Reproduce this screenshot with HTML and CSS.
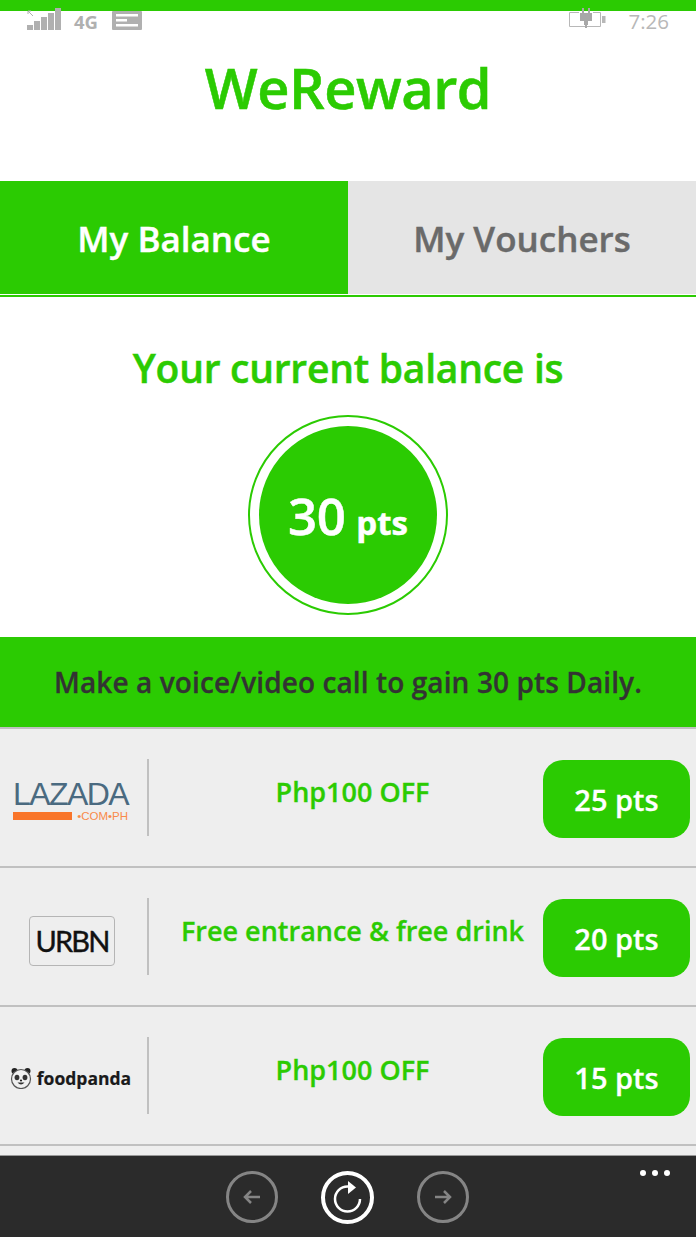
FILE: index.html
```html
<!DOCTYPE html>
<html lang="en">
<head>
    <meta charset="UTF-8">
    <meta name="viewport" content="width=device-width, initial-scale=1.0">
    <title>WeReward</title>
    <link rel="stylesheet" href="styles.css">
</head>
<body>

    <!-- Phone status bar -->
    <div class="status-bar">
        <div class="status-group">
            <svg class="signal" width="34" height="22" viewBox="0 0 34 22">
                <path d="M1 3l5 5M1 3h3M1 3v3" fill="none" stroke="#b0b0b0" stroke-width="1"/>
                <rect x="0" y="17" width="6" height="5" fill="#b0b0b0"/>
                <rect x="7" y="13" width="6" height="9" fill="#b0b0b0"/>
                <rect x="14" y="9" width="6" height="13" fill="#b0b0b0"/>
                <rect x="21" y="5" width="6" height="17" fill="#b0b0b0"/>
                <rect x="28" y="0" width="6" height="22" fill="#b0b0b0"/>
            </svg>
            <span class="network">4G</span>
            <svg class="message" width="30" height="19" viewBox="0 0 30 19">
                <rect width="30" height="19" rx="1" fill="#b0b0b0"/>
                <rect x="4" y="3" width="22" height="2.500" fill="#fff"/>
                <rect x="4" y="8" width="11" height="2.500" fill="#fff"/>
                <rect x="4" y="13" width="22" height="2.500" fill="#fff"/>
            </svg>
        </div>
        <div class="status-group">
            <svg class="battery" width="37" height="20" viewBox="0 0 37 20">
                <path d="M10 4.500H0.500V18.500H31.500V4.500H24" fill="none" stroke="#b8b8b8" stroke-width="1"/>
                <rect x="33" y="8" width="3.500" height="7" fill="#b8b8b8"/>
                <path d="M11 5h12v8h-4v4h-4v-4h-4z M13 0h2v5h-2z M19 0h2v5h-2z M16 17h2v3h-2z" fill="#a8a8a8"/>
            </svg>
            <span class="clock">7:26</span>
        </div>
    </div>

    <header class="app-header">
        <h1>WeReward</h1>
    </header>

    <nav class="tabs">
        <a class="tab tab-active">My Balance</a>
        <a class="tab">My Vouchers</a>
    </nav>

    <section class="balance">
        <h2>Your current balance is</h2>
        <div class="balance-ring">
            <div class="balance-circle">
                <span class="balance-num">30</span>
                <span class="balance-unit">pts</span>
            </div>
        </div>
    </section>

    <div class="banner">Make a voice/video call to gain 30 pts Daily.</div>

    <!-- Voucher list -->
    <ul class="vouchers">
        <li class="voucher">
            <div class="brand">
                <div class="lazada">
                    <span class="lazada-name">LAZADA</span>
                    <span class="lazada-sub"><i class="lazada-bar"></i><span>•COM•PH</span></span>
                </div>
            </div>
            <p class="voucher-title">Php100 OFF</p>
            <a class="points">25 pts</a>
        </li>
        <li class="voucher">
            <div class="brand">
                <span class="urbn">URBN</span>
            </div>
            <p class="voucher-title">Free entrance &amp; free drink</p>
            <a class="points">20 pts</a>
        </li>
        <li class="voucher">
            <div class="brand">
                <div class="foodpanda">
                    <svg width="22" height="22" viewBox="0 0 22 22">
                        <circle cx="4.500" cy="4" r="3" fill="#222"/>
                        <circle cx="17.500" cy="4" r="3" fill="#222"/>
                        <circle cx="11" cy="12" r="9.500" fill="#f0f0f0" stroke="#555" stroke-width="1.200"/>
                        <ellipse cx="7" cy="10.500" rx="2.400" ry="2.800" fill="#333"/>
                        <ellipse cx="15" cy="10.500" rx="2.400" ry="2.800" fill="#333"/>
                        <circle cx="11" cy="13.500" r="1.100" fill="#222"/>
                        <path d="M7.500 15.500q3.500 4 7 0" fill="#333"/>
                    </svg>
                    <span>foodpanda</span>
                </div>
            </div>
            <p class="voucher-title">Php100 OFF</p>
            <a class="points">15 pts</a>
        </li>
    </ul>

    <!-- Browser app bar -->
    <footer class="app-bar">
        <span class="round-btn">
            <svg width="20" height="16" viewBox="0 0 20 16">
                <path d="M9 2L3 8l6 6M3 8h15" fill="none" stroke="#858585" stroke-width="2.500"/>
            </svg>
        </span>
        <span class="round-btn round-btn-on">
            <svg width="30" height="34" viewBox="0 0 30 34">
                <path d="M27 18a12.500 12.500 0 1 1-12.500-12.500h2" fill="none" stroke="#fff" stroke-width="2.500"/>
                <path d="M15 0l8 6.500-8 6.500z" fill="#fff"/>
            </svg>
        </span>
        <span class="round-btn">
            <svg width="20" height="16" viewBox="0 0 20 16">
                <path d="M11 2l6 6-6 6M17 8H2" fill="none" stroke="#858585" stroke-width="2.500"/>
            </svg>
        </span>
        <div class="more"><i></i><i></i><i></i></div>
    </footer>

</body>
</html>
```

FILE: styles.css
```css
:root {
    --green: #2bcb02;
    --row-bg: #eeeeee;
    --line: #c0c0c0;
}

* {
    margin: 0;
    padding: 0;
    box-sizing: border-box;
}

body {
    width: 696px;
    height: 1237px;
    overflow: hidden;
    background: #fff;
    font-family: 'Open Sans', sans-serif;
    font-weight: 600;
    color: var(--green);
}

/* Status bar */
.status-bar {
    height: 31px;
    padding: 8px 27px 0 27px;
    display: flex;
    justify-content: space-between;
    align-items: flex-start;
    background: linear-gradient(var(--green) 11px, #fff 11px);
}

.status-group {
    display: flex;
    align-items: flex-start;
}

.network {
    margin: 3px 14px 0 13px;
    font-size: 18.500px;
    line-height: 21px;
    font-weight: 700;
    color: #b0b0b0;
}

.message {
    margin-top: 3px;
}

.clock {
    margin: 1px 0 0 22px;
    font-size: 20.500px;
    line-height: 24px;
    font-weight: 400;
    color: #b8b8b8;
}

/* Title */
.app-header {
    height: 150px;
    padding-top: 20px;
    text-align: center;
}

.app-header h1 {
    font-size: 56px;
    line-height: 72px;
    font-weight: 600;
    letter-spacing: -0.5px;
    -webkit-text-stroke: 0.5px currentColor;
}

/* Tabs */
.tabs {
    display: flex;
    height: 116px;
    padding-bottom: 1px;
    border-bottom: 2px solid var(--green);
}

.tab {
    flex: 1;
    display: flex;
    align-items: center;
    justify-content: center;
    padding-top: 2px;
    font-size: 35px;
    -webkit-text-stroke: 0.4px currentColor;
    color: #6a6a6a;
    background: #e5e5e5;
}

.tab-active {
    color: #fff;
    background: var(--green);
}

/* Balance */
.balance {
    height: 340px;
    padding-top: 44px;
    display: flex;
    flex-direction: column;
    align-items: center;
}

.balance h2 {
    font-size: 39px;
    line-height: 54px;
    font-weight: 600;
    letter-spacing: -0.25px;
    -webkit-text-stroke: 0.5px currentColor;
}

.balance-ring {
    width: 200px;
    height: 200px;
    margin-top: 20px;
    padding: 9px;
    border: 2px solid var(--green);
    border-radius: 50%;
}

.balance-circle {
    height: 100%;
    border-radius: 50%;
    background: var(--green);
    color: #fff;
    display: flex;
    align-items: baseline;
    justify-content: center;
    gap: 11px;
    line-height: 178px;
    -webkit-text-stroke: 0.5px currentColor;
}

.balance-num {
    font-size: 51px;
    letter-spacing: -0.5px;
}

.balance-unit {
    font-size: 33px;
    font-weight: 700;
}

/* Banner */
.banner {
    height: 90px;
    display: flex;
    align-items: center;
    justify-content: center;
    background: var(--green);
    color: #333;
    font-size: 28px;
    letter-spacing: 0.1px;
    -webkit-text-stroke: 0.3px currentColor;
}

/* Vouchers */
.vouchers {
    list-style: none;
    height: 428px;
    background: var(--row-bg);
    border-top: 2px solid var(--line);
}

.voucher {
    height: 139px;
    padding: 31px 6px 0 0;
    display: flex;
    align-items: flex-start;
    border-bottom: 2px solid var(--line);
}

.brand {
    width: 149px;
    height: 77px;
    margin-top: -1px;
    padding: 5px 3px 0 0;
    flex-shrink: 0;
    display: flex;
    align-items: center;
    justify-content: center;
    border-right: 2px solid var(--line);
}

.voucher-title {
    flex: 1;
    padding-left: 13px;
    text-align: center;
    font-size: 27px;
    line-height: 36px;
    margin-top: 14px;
    white-space: nowrap;
    -webkit-text-stroke: 0.3px currentColor;
}

.points {
    width: 147px;
    height: 78px;
    flex-shrink: 0;
    display: flex;
    align-items: center;
    justify-content: center;
    border-radius: 20px;
    background: var(--green);
    color: #fff;
    font-size: 29px;
    -webkit-text-stroke: 0.3px currentColor;
}

/* Brand logos */
.lazada {
    width: 115px;
    margin-left: -3px;
    display: flex;
    flex-direction: column;
    color: #4a6a80;
    font-family: 'Liberation Sans', sans-serif;
    font-weight: 400;
}

.lazada-name {
    font-size: 32px;
    line-height: 28px;
    letter-spacing: -1.6px;
}

.lazada-sub {
    display: flex;
    align-items: center;
    justify-content: space-between;
    margin-top: 3px;
    font-size: 11.500px;
    line-height: 10px;
    color: #f98a4a;
}

.lazada-bar {
    width: 59px;
    height: 8px;
    background: #f9752a;
}

.urbn {
    width: 86px;
    height: 50px;
    margin-top: 3px;
    display: flex;
    align-items: center;
    justify-content: center;
    border: 1.500px solid #b5b5b5;
    border-radius: 4px;
    color: #111;
    font-family: Lato, sans-serif;
    font-size: 29px;
    font-weight: 400;
    letter-spacing: -1.8px;
    -webkit-text-stroke: 0.4px currentColor;
}

.foodpanda {
    margin-left: -3px;
    display: flex;
    align-items: center;
    gap: 5px;
    color: #1a1a1a;
    font-size: 17.500px;
    font-weight: 700;
    -webkit-text-stroke: 0.2px currentColor;
}

/* App bar */
.app-bar {
    position: relative;
    height: 82px;
    padding: 15px 0 0 226px;
    display: flex;
    align-items: flex-start;
    gap: 43px;
    background: #2b2b2b;
    border-top: 1px solid #999;
}

.round-btn {
    width: 52px;
    height: 52px;
    display: flex;
    align-items: center;
    justify-content: center;
    border: 3px solid #858585;
    border-radius: 50%;
}

.round-btn-on {
    width: 53px;
    height: 53px;
    border-width: 4px;
    border-color: #fff;
}

.more {
    position: absolute;
    top: 14px;
    right: 26px;
    display: flex;
    gap: 6px;
}

.more i {
    width: 6px;
    height: 6px;
    border-radius: 50%;
    background: #fff;
}
```
